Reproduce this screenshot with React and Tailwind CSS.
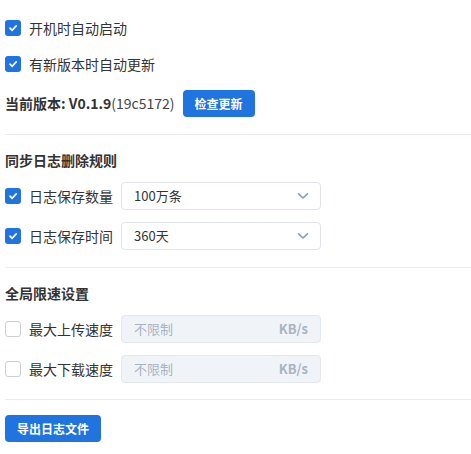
import React from "react";

const font = { fontFamily: '"Noto Sans CJK SC", "Noto Sans", sans-serif' };

function Check({ checked }) {
  if (checked) {
    return (
      <span className="flex h-[16px] w-[16px] shrink-0 items-center justify-center rounded-[3px] bg-[#1f74e0]">
        <svg width="10" height="10" viewBox="0 0 10 10" fill="none">
          <path d="M2 5.2 L4.2 7.3 L8.2 2.9" stroke="white" strokeWidth="1.7" strokeLinecap="round" strokeLinejoin="round" />
        </svg>
      </span>
    );
  }
  return <span className="h-[16px] w-[16px] shrink-0 rounded-[3px] border border-[#c9d0da] bg-white" />;
}

function Chevron() {
  return (
    <svg width="12" height="8" viewBox="0 0 12 8" fill="none">
      <path d="M1.5 1.8 L6 6 L10.5 1.8" stroke="#8b9bb0" strokeWidth="1.6" strokeLinecap="round" strokeLinejoin="round" />
    </svg>
  );
}

function Divider({ className }) {
  return <div className={"h-px bg-[#e8ebf0] " + className} />;
}

export default function App() {
  return (
    <div className="min-h-[454px] bg-white pl-[5px] pt-[10px] text-[14px] text-[#333]" style={font}>
      <div className="flex h-[36px] items-center gap-[8px]">
        <Check checked />
        <span>开机时自动启动</span>
      </div>
      <div className="flex h-[36px] items-center gap-[8px]">
        <Check checked />
        <span>有新版本时自动更新</span>
      </div>
      <div className="mt-[8px] flex h-[27px] items-center">
        <span className="font-bold">当前版本: V0.1.9</span>
        <span className="text-[#444]">(19c5172)</span>
        <button className="ml-[8px] flex h-[27px] w-[72px] items-center justify-center rounded-[4px] bg-[#1f74e0] text-[12px] font-bold text-white">
          检查更新
        </button>
      </div>
      <Divider className="mt-[17px]" />

      <div className="mt-[15px] flex h-[20px] items-center font-bold">同步日志删除规则</div>
      <div className="mt-[12px] flex h-[28px] items-center">
        <div className="flex w-[116px] items-center gap-[8px]">
          <Check checked />
          <span>日志保存数量</span>
        </div>
        <div className="flex h-[28px] w-[200px] items-center justify-between rounded-[4px] border border-[#e0e4ea] bg-white pl-[12px] pr-[11px] text-[13px]">
          <span>100万条</span>
          <Chevron />
        </div>
      </div>
      <div className="mt-[12px] flex h-[28px] items-center">
        <div className="flex w-[116px] items-center gap-[8px]">
          <Check checked />
          <span>日志保存时间</span>
        </div>
        <div className="flex h-[28px] w-[200px] items-center justify-between rounded-[4px] border border-[#e0e4ea] bg-white pl-[12px] pr-[11px] text-[13px]">
          <span>360天</span>
          <Chevron />
        </div>
      </div>
      <Divider className="mt-[17px]" />

      <div className="mt-[15px] flex h-[20px] items-center font-bold">全局限速设置</div>
      <div className="mt-[12px] flex h-[28px] items-center">
        <div className="flex w-[116px] items-center gap-[8px]">
          <Check />
          <span>最大上传速度</span>
        </div>
        <div className="flex h-[28px] w-[200px] items-center justify-between rounded-[4px] border border-[#e3e7ee] bg-[#f0f3f8] pl-[12px] pr-[12px] text-[13px]">
          <span className="text-[#a9b4c2]">不限制</span>
          <span className="font-bold text-[#a9b4c2]">KB/s</span>
        </div>
      </div>
      <div className="mt-[12px] flex h-[28px] items-center">
        <div className="flex w-[116px] items-center gap-[8px]">
          <Check />
          <span>最大下载速度</span>
        </div>
        <div className="flex h-[28px] w-[200px] items-center justify-between rounded-[4px] border border-[#e3e7ee] bg-[#f0f3f8] pl-[12px] pr-[12px] text-[13px]">
          <span className="text-[#a9b4c2]">不限制</span>
          <span className="font-bold text-[#a9b4c2]">KB/s</span>
        </div>
      </div>
      <Divider className="mt-[16px]" />

      <button className="mt-[15px] flex h-[27px] w-[96px] items-center justify-center rounded-[4px] bg-[#1f74e0] text-[12px] font-bold text-white">
        导出日志文件
      </button>
    </div>
  );
}
